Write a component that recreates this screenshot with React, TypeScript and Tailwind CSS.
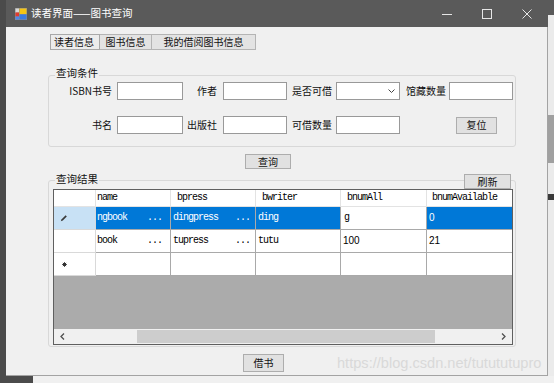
import React from "react";

function Btn({ label, className }: { label: string; className: string }) {
  return (
    <div
      className={
        "flex items-center justify-center bg-[#e1e1e1] border border-[#adadad] text-[10px] leading-none text-[#111] " +
        className
      }
    >
      {label}
    </div>
  );
}

function Label({ text, pr }: { text: string; pr: string }) {
  return (
    <div className={"flex items-center justify-end text-[10px] leading-none text-[#111] whitespace-nowrap " + pr}>
      {text}
    </div>
  );
}

function Box() {
  return <div className="bg-white border border-[#999999]" />;
}

function Pencil() {
  return (
    <svg width="8" height="8" viewBox="0 0 8 8" className="ml-[6px]">
      <path d="M0.8 7.2 L1.6 5.2 L5.6 1.2 L6.8 2.4 L2.8 6.4 Z" fill="#3a3a3a" />
    </svg>
  );
}

function Star() {
  return (
    <svg width="5" height="5" viewBox="0 0 5 5" className="ml-[8px]">
      <path d="M2.5 0.2v4.6M0.2 2.5h4.6M0.9 0.9l3.2 3.2M4.1 0.9l-3.2 3.2" stroke="#333" strokeWidth="1" />
    </svg>
  );
}

const mono = "font-['Liberation_Mono',monospace] text-[10px] tracking-[-1px] leading-none whitespace-nowrap";
const num = "font-['Liberation_Sans',sans-serif] text-[10px] leading-none whitespace-nowrap";

function DataGrid() {
  const hc = "flex items-center border-r border-b border-[#e3e3e3] bg-white text-black " + mono;
  const dc = "flex items-center border-r border-b border-[#a9a9a9] ";
  const rh = "flex items-center w-[42px] border-r border-b border-[#d9d9d9] ";
  return (
    <div className="w-[460px] h-[156px] border border-[#5f5f5f] flex flex-col bg-[#ababab] overflow-hidden">
      {/* header */}
      <div className="flex h-[17px] shrink-0">
        <div className={hc + " w-[42px]"} />
        <div className={hc + " w-[75px] pl-[1px]"}>name</div>
        <div className={hc + " w-[85px] pl-[6px]"}>bpress</div>
        <div className={hc + " w-[85px] pl-[6px]"}>bwriter</div>
        <div className={hc + " w-[86px] pl-[6px]"}>bnumAll</div>
        <div className={hc + " w-[85px] pl-[5px] border-r-0"}>bnumAvailable</div>
      </div>
      {/* row 1 selected */}
      <div className="flex h-[23px] shrink-0">
        <div className={rh + "bg-[#c8e1f5]"}>
          <Pencil />
        </div>
        <div className={dc + "w-[75px] bg-[#0078d7] text-white justify-between pl-[1px] pr-[8px] " + mono}>
          <span>ngbook</span>
          <span>...</span>
        </div>
        <div className={dc + "w-[85px] bg-[#0078d7] text-white justify-between pl-[2px] pr-[5px] " + mono}>
          <span>dingpress</span>
          <span>...</span>
        </div>
        <div className={dc + "w-[85px] bg-[#0078d7] text-white pl-[2px] " + mono}>ding</div>
        <div className={dc + "w-[86px] bg-white text-black pl-[3px] " + mono}>g</div>
        <div className={dc + "w-[85px] bg-[#0078d7] text-white pl-[2px] border-r-0 " + num}>0</div>
      </div>
      {/* row 2 */}
      <div className="flex h-[23px] shrink-0 bg-white text-black">
        <div className={rh} />
        <div className={dc + "w-[75px] justify-between pl-[1px] pr-[8px] " + mono}>
          <span>book</span>
          <span>...</span>
        </div>
        <div className={dc + "w-[85px] justify-between pl-[2px] pr-[5px] " + mono}>
          <span>tupress</span>
          <span>...</span>
        </div>
        <div className={dc + "w-[85px] pl-[2px] " + mono}>tutu</div>
        <div className={dc + "w-[86px] pl-[2px] " + num}>100</div>
        <div className={dc + "w-[85px] pl-[2px] border-r-0 " + num}>21</div>
      </div>
      {/* row 3 new */}
      <div className="flex h-[23px] shrink-0 bg-white">
        <div className={rh}>
          <Star />
        </div>
        <div className={dc + "w-[75px]"} />
        <div className={dc + "w-[85px]"} />
        <div className={dc + "w-[85px]"} />
        <div className={dc + "w-[86px]"} />
        <div className={dc + "w-[85px] border-r-0"} />
      </div>
      <div className="flex-1" />
      {/* scrollbar */}
      <div className="flex h-[15px] shrink-0 bg-[#f0f0f0]">
        <div className="w-[17px] flex items-center justify-center">
          <svg width="5" height="7" viewBox="0 0 5 7">
            <path d="M4 0.5L1 3.5L4 6.5" stroke="#505050" fill="none" strokeWidth="1.3" />
          </svg>
        </div>
        <div className="flex-1 flex items-center">
          <div className="ml-[66px] w-[298px] h-[13px] bg-[#cdcdcd]" />
        </div>
        <div className="w-[17px] flex items-center justify-center">
          <svg width="5" height="7" viewBox="0 0 5 7">
            <path d="M1 0.5L4 3.5L1 6.5" stroke="#505050" fill="none" strokeWidth="1.3" />
          </svg>
        </div>
      </div>
    </div>
  );
}

function Window() {
  return (
    <div className="w-[542px] flex flex-col">
      {/* title bar */}
      <div className="h-[27px] bg-[#5a5a5a] flex items-center shrink-0">
        <svg width="12" height="12" viewBox="0 0 12 12" className="ml-[9px]">
          <rect x="0" y="0" width="12" height="12" fill="#8c8c8c" />
          <rect x="0.5" y="0.5" width="3.5" height="4" fill="#d9d9d9" />
          <rect x="0.5" y="4.5" width="3.5" height="4" fill="#e23b2e" />
          <rect x="0.5" y="8.5" width="3.5" height="3" fill="#4f86e8" />
          <rect x="4.5" y="0.5" width="7" height="5.5" fill="#f6c514" />
          <rect x="4.5" y="6.5" width="7" height="5" fill="#3b7be2" />
        </svg>
        <span className="ml-[4px] text-[10.5px] leading-none text-white whitespace-nowrap">读者界面——图书查询</span>
        <div className="ml-auto mr-[1px] flex h-full">
          <div className="w-[40px] flex items-center justify-center">
            <svg width="10" height="10" viewBox="0 0 10 10">
              <path d="M0 5.5H10" stroke="#e6e6e6" strokeWidth="1" />
            </svg>
          </div>
          <div className="w-[40px] flex items-center justify-center">
            <svg width="10" height="10" viewBox="0 0 10 10">
              <rect x="0.5" y="0.5" width="9" height="9" stroke="#e6e6e6" fill="none" strokeWidth="1" />
            </svg>
          </div>
          <div className="w-[40px] flex items-center justify-center">
            <svg width="10" height="10" viewBox="0 0 10 10">
              <path d="M0.5 0.5L9.5 9.5M9.5 0.5L0.5 9.5" stroke="#e6e6e6" strokeWidth="1" />
            </svg>
          </div>
        </div>
      </div>
      {/* client */}
      <div className="h-[349px] bg-[#f0f0f0] border-r border-b border-[#a3a3a3] flex flex-col pt-[7px]">
        {/* tabs */}
        <div className="ml-[44px] flex h-[16px] text-[10px] leading-none text-[#111]">
          <div className="w-[50px] flex items-center pl-[3px] bg-[#ececec] border border-[#a8a8a8]">读者信息</div>
          <div className="w-[52px] flex items-center justify-center bg-[#e3e3e3] border border-l-0 border-[#b4b4b4]">图书信息</div>
          <div className="w-[104px] flex items-center justify-center bg-[#e3e3e3] border border-l-0 border-[#b4b4b4]">我的借阅图书信息</div>
        </div>
        {/* group 1 */}
        <div className="relative mt-[25px] ml-[42px] w-[468px] h-[72px] border border-[#d8d8d8] rounded-[3px] pt-[6px]">
          <div className="absolute left-[6px] top-[-10px] px-[1px] bg-[#f0f0f0] text-[10.5px] leading-[14px] text-[#111]">查询条件</div>
          <div className="grid grid-cols-[68px_66px_40px_64px_49px_64px_49px_64px] grid-rows-[18px_18px] gap-y-[16px]">
            <Label text="ISBN书号" pr="pr-[5px]" />
            <Box />
            <Label text="作者" pr="pr-[6px]" />
            <Box />
            <Label text="是否可借" pr="pr-[4px]" />
            <div className="bg-white border border-[#999999] flex items-center justify-end pr-[4px]">
              <svg width="7" height="4" viewBox="0 0 7 4">
                <path d="M0.5 0.5L3.5 3.5L6.5 0.5" stroke="#444" fill="none" strokeWidth="1" />
              </svg>
            </div>
            <Label text="馆藏数量" pr="pr-[3px]" />
            <Box />

            <Label text="书名" pr="pr-[5px]" />
            <Box />
            <Label text="出版社" pr="pr-[6px]" />
            <Box />
            <Label text="可借数量" pr="pr-[4px]" />
            <Box />
            <div />
            <div className="flex items-center">
              <Btn label="复位" className="ml-[7px] w-[41px] h-[17px]" />
            </div>
          </div>
        </div>
        {/* query button */}
        <Btn label="查询" className="mt-[7px] ml-[239px] w-[46px] h-[15px]" />
        {/* group 2 */}
        <div className="relative mt-[11px] ml-[42px] w-[468px] h-[167px] border border-[#d8d8d8] rounded-[3px] pt-[8px] pl-[4px]">
          <div className="absolute left-[6px] top-[-9px] px-[1px] bg-[#f0f0f0] text-[10.5px] leading-[14px] text-[#111]">查询结果</div>
          <Btn label="刷新" className="absolute left-[415px] top-[-7px] w-[47px] h-[15px]" />
          <DataGrid />
        </div>
        {/* bottom row */}
        <div className="mt-[7px] flex items-center">
          <Btn label="借书" className="ml-[237px] w-[41px] h-[18px]" />
          <span className="ml-[53px] font-['Liberation_Sans',sans-serif] text-[14.6px] leading-none text-[#d9d9d9] whitespace-nowrap">
            https://blog.csdn.net/tutututupro
          </span>
        </div>
      </div>
    </div>
  );
}

export default function App() {
  return (
    <div className="w-[554px] h-[383px] overflow-hidden flex flex-col bg-[#4b4b4b] font-['Noto_Sans_CJK_SC','Noto_Sans',sans-serif]">
      <div className="flex h-[376px] shrink-0">
        <div className="w-[6px] bg-[#4b4b4b]" />
        <Window />
        <div className="w-[6px] flex flex-col">
          <div className="h-[15px] bg-[#5a5a5a]" />
          <div className="h-[100px] bg-[#ebebeb]" />
          <div className="h-[48px] bg-[#a0a0a0]" />
          <div className="h-[31px] bg-[#ebebeb]" />
          <div className="h-[6px] bg-[#3a3a3a]" />
          <div className="flex-1 bg-[#ebebeb]" />
        </div>
      </div>
      <div className="flex h-[7px] shrink-0">
        <div className="w-[33px] bg-[#4b4b4b]" />
        <div className="flex-1 bg-[#f0f0f0]" />
      </div>
    </div>
  );
}
